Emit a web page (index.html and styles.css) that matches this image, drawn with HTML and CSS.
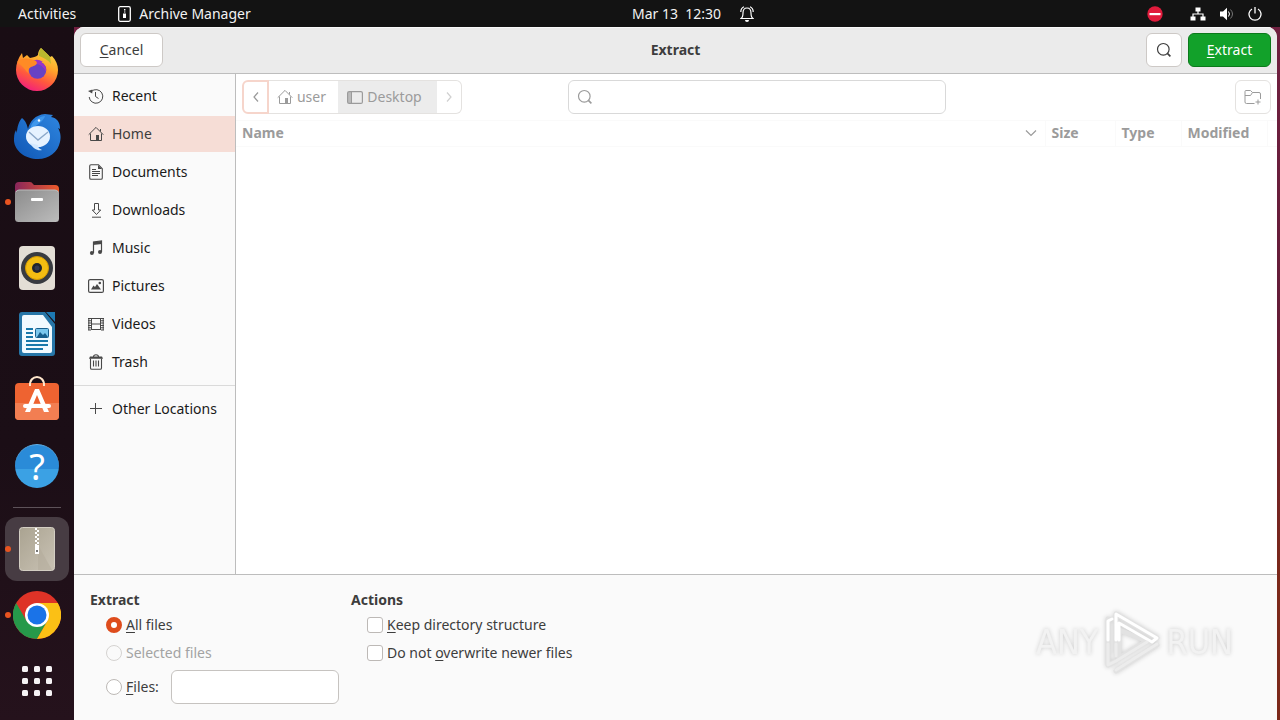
FILE: index.html
```html
<!DOCTYPE html>
<html lang="en">
<head>
<meta charset="utf-8">
<title>Extract</title>
<link rel="stylesheet" href="styles.css">
</head>
<body>
<svg class="sprite" aria-hidden="true">
  <symbol id="home" viewBox="0 0 16 16"><path d="M.7 8.7 8 1.4l7.3 7.3M2.5 7.5v7h11v-7M12.5 3v2.5" fill="none" stroke="currentColor"/><path d="M8 9h3v6H8z" fill="currentColor"/></symbol>
  <symbol id="search" viewBox="0 0 16 16"><circle cx="7.3" cy="7.3" r="5.8" fill="none" stroke="currentColor" stroke-width="1.2"/><path d="m11.4 11.4 3 3" stroke="currentColor" stroke-width="1.6"/></symbol>
</svg>
<header class="topbar">
  <div class="topbar-left">
    <button class="top-btn">Activities</button>
    <button class="top-btn app-menu">
      <svg width="14" height="16" viewBox="0 0 14 16"><rect x=".7" y=".7" width="11.6" height="14.6" rx="1.5" fill="none" stroke="#fff" stroke-width="1.3"/><path d="M6 3h1.4v1.4H6zM6 5.5h1.4v1H6zM5 7.5h3v4.5H5z" fill="#fff"/></svg>
      Archive Manager
    </button>
  </div>
  <div class="clock"><time>Mar 13&nbsp; 12:30</time>
    <svg width="14" height="16" viewBox="0 0 14 16"><path d="M1 12.5c1.7-1 2-2.500 2-5.500 0-3 1.500-5 4-5s4 2 4 5c0 3 .3 4.500 2 5.500zM.8 6C.8 3.500 2 1.500 4 .7M13.200 6c0-2.500-1.200-4.500-3.200-5.300" fill="none" stroke="#fff" stroke-width="1.200"/><path d="M5 14h4a2 2 0 0 1-4 0" fill="#fff"/></svg>
  </div>
  <div class="status">
    <svg class="dnd" width="16" height="16" viewBox="0 0 16 16"><circle cx="8" cy="8" r="7.700" fill="#e01b3c"/><path d="M2.500 7h11v2.200h-11z" fill="#fff"/></svg>
    <svg width="16" height="16" viewBox="0 0 16 16"><path d="M5.500 1.500h5v4h-5zM.5 10.500h5v4h-5zM10.500 10.500h5v4h-5z" fill="#fff"/><path d="M8 5v3M3 11V8h10v3" fill="none" stroke="#fff" stroke-width="1.200"/></svg>
    <svg width="16" height="16" viewBox="0 0 16 16"><path d="M1 5.500h3L8 1.700v12.600l-4-3.800H1z" fill="#fff"/><path d="M9.500 5.500q2 2.500 0 5" fill="none" stroke="#fff"/><path d="M11.500 3.500q4 4.500 0 9" fill="none" stroke="#777"/></svg>
    <svg width="14" height="16" viewBox="0 0 14 16"><path d="M4 3a6 6 0 1 0 6 0M7 1v6.500" fill="none" stroke="#fff" stroke-width="1.300"/></svg>
  </div>
</header>

<div class="desktop">
  <nav class="dock" aria-label="Dock">
    <button class="dock-item" aria-label="Firefox"><svg width="48" height="48" viewBox="0 0 48 48">
      <defs><linearGradient id="ff" x1=".8" y1="0" x2=".35" y2="1"><stop offset="0" stop-color="#f6e04a"/><stop offset=".4" stop-color="#ffa52a"/><stop offset=".7" stop-color="#ff5a3c"/><stop offset="1" stop-color="#f3207c"/></linearGradient></defs>
      <path d="M28 2c4 4 7 6 9 9l2-1c4 4 6 9 6 14a21 21 0 0 1-42 0c0-6 2-12 6-17l1 5 4-3 3 3c3-1 6-1 8-3 0-3 1-5 3-7z" fill="url(#ff)"/>
      <path d="M28 2c4 4 7 6 9 9l1 7c-3-4-7-6-12-8 0-3 0-5 2-8z" fill="#b9b82e"/>
      <circle cx="24.500" cy="24" r="8.800" fill="#6742c4"/><path d="M17 17q6-6 13-1l-2 0q6 4 5 10-4-9-12-8z" fill="#9a34c8"/><path d="M4 16c6-5 12-4 19-1l1 2c-1 3-4 3-6 4-3 2-3 4-2 7-4-4-5-7-12-12z" fill="#ff8b25"/></svg></button>
    <button class="dock-item" aria-label="Thunderbird"><svg width="48" height="48" viewBox="0 0 48 48">
      <defs><linearGradient id="tb" x1="1" y1="0" x2="0" y2="1"><stop offset="0" stop-color="#2f86e0"/><stop offset="1" stop-color="#0f56b4"/></linearGradient></defs>
      <path d="M9 6c4 3 5 7 6 11 2-8 7-14 17-15l8 1-2 2c6 1 9 5 9 12l-2-1c3 5 3 10 2 14-2 10-11 17-22 17C12 47 2 39 1 29c0-4 0-8 2-11l1 3C4 15 6 9 9 6z" fill="url(#tb)"/>
      <path d="M17 18c1-8 7-13 15-14-1 4-5 7-8 9" fill="#3f97ec"/><circle cx="26" cy="8.500" r="1.200" fill="#fff"/>
      <ellipse cx="25" cy="24.500" rx="12" ry="10.500" fill="#e6f2ff"/><path d="m16 20 9 8 10-8" fill="none" stroke="#8ca8c9" stroke-width="1.400"/><path d="M17 31c3 6 8 8 12 7-3-1-4-3-4-5" fill="#d4e9ff"/></svg></button>
    <button class="dock-item running" aria-label="Files"><svg width="48" height="48" viewBox="0 0 48 48">
      <defs><linearGradient id="fa"><stop stop-color="#89265b"/><stop offset="1" stop-color="#ee5b2b"/></linearGradient><linearGradient id="fb" x1="0" y1="0" x2="1" y2="1"><stop stop-color="#8c8c8c"/><stop offset="1" stop-color="#bcbcbc"/></linearGradient></defs>
      <path d="M2 8q0-4 4-4h11q2 0 3 2l1 1h21q4 0 4 4v15H2z" fill="url(#fa)"/><rect x="2" y="12" width="44" height="32" rx="3.500" fill="url(#fb)"/><path d="M3 14q1-2 3-2h36q2 0 3 2" fill="none" stroke="#bbb"/><rect x="18" y="20" width="12" height="3" rx="1" fill="#fff"/></svg></button>
    <button class="dock-item" aria-label="Rhythmbox"><svg width="48" height="48" viewBox="0 0 48 48"><rect x="6" y="2" width="36" height="44" rx="4" fill="#e3ded5"/><circle cx="24" cy="24" r="16" fill="#383b40"/><circle cx="24" cy="24" r="11.500" fill="#f3bd12" stroke="#d49b00"/><circle cx="24" cy="24" r="5" fill="#20242d"/><circle cx="24" cy="24" r="2.500" fill="#343a50"/></svg></button>
    <button class="dock-item" aria-label="LibreOffice Writer"><svg width="48" height="48" viewBox="0 0 48 48"><path d="M9 2h23l10 12v29q0 3-3 3H9q-3 0-3-3V5q0-3 3-3z" fill="#2676a8"/><path d="M33 2h9v10z" fill="#1d79b3"/><path d="M11 5h19l9 12v24q0 2-2 2H11q-2 0-2-2V7q0-2 2-2z" fill="#f1faff"/><path d="M13 19h7M13 23h7M13 27h7M13 31h22M13 35h22M13 39h17" stroke="#1878aa" stroke-width="2"/><rect x="22.500" y="18.500" width="13" height="9" rx="1" fill="#7ac7ed" stroke="#175f8d"/><path d="m24 27 3-5 3 3 2-2 3 4z" fill="#175f8d"/></svg></button>
    <button class="dock-item" aria-label="Ubuntu Software"><svg width="48" height="48" viewBox="0 0 48 48"><rect x="2" y="7" width="44" height="37" rx="4" fill="#ee6331"/><path d="M2 27h44v13q0 4-4 4H6q-4 0-4-4z" fill="#f27e52"/><path d="M17 10c-1-12 15-12 14 0" fill="none" stroke="#ffe6cc" stroke-width="2"/><path d="M22 13h4l10 23h-5l-7-17-7 17h-5z" fill="#fff"/><path d="M12 30h24" stroke="#fff" stroke-width="4" stroke-linecap="round"/></svg></button>
    <button class="dock-item" aria-label="Help"><span class="help-icon">?</span></button>
    <hr class="dock-sep">
    <button class="dock-item running active" aria-label="Archive Manager"><svg width="48" height="48" viewBox="0 0 48 48"><defs><linearGradient id="ar" x1="0" y1="0" x2="1" y2="1"><stop stop-color="#aaa391"/><stop offset="1" stop-color="#c9c2b4"/></linearGradient></defs><rect x="6.500" y="2.500" width="35" height="43" rx="3" fill="url(#ar)" stroke="#d3cec3"/><path d="m25 20 14 25H25z" fill="#b1aa99" opacity=".5"/><path d="M23 3v17M25 5v15" stroke="#fff" stroke-width="2" stroke-dasharray="2 2"/><path d="M22 20h4v9h-4z" fill="#fff"/><path d="M23 25h2v2h-2z" fill="#777"/></svg></button>
    <button class="dock-item running" aria-label="Google Chrome"><svg width="48" height="48" viewBox="0 0 48 48"><circle cx="24" cy="24" r="24" fill="#de3327"/><path d="M3.200 12A24 24 0 0 0 24 48L34.400 30 24 36 13.600 30z" fill="#26994a"/><path d="M44.800 12A24 24 0 0 1 24 48L34.400 30 34 18 24 12z" fill="#fbc015"/><circle cx="24" cy="24" r="12" fill="#fff"/><circle cx="24" cy="24" r="9.500" fill="#1a73e8"/></svg></button>
    <button class="dock-item" aria-label="Show Applications"><svg width="48" height="48" viewBox="0 0 48 48" fill="#f6f3f5"><rect x="9" y="9" width="6" height="6" rx="1.500"/><rect x="21" y="9" width="6" height="6" rx="1.500"/><rect x="33" y="9" width="6" height="6" rx="1.500"/><rect x="9" y="21" width="6" height="6" rx="1.500"/><rect x="21" y="21" width="6" height="6" rx="1.500"/><rect x="33" y="21" width="6" height="6" rx="1.500"/><rect x="9" y="33" width="6" height="6" rx="1.500"/><rect x="21" y="33" width="6" height="6" rx="1.500"/><rect x="33" y="33" width="6" height="6" rx="1.500"/></svg></button>
  </nav>

  <main class="dialog">
    <header class="headerbar">
      <div class="head-start"><button class="btn"><span><u>C</u>ancel</span></button></div>
      <h1 class="title">Extract</h1>
      <div class="head-end">
        <button class="btn icon-btn" aria-label="Search"><svg width="16" height="16"><use href="#search"/></svg></button>
        <button class="btn suggested"><span><u>E</u>xtract</span></button>
      </div>
    </header>

    <div class="body">
      <nav class="places" aria-label="Places">
        <a class="place" href="#"><svg width="16" height="16" viewBox="0 0 16 16"><path d="M3.300 3.500A6.800 6.800 0 1 1 1.200 9M7.500 4v4.500l3 2" fill="none" stroke="currentColor"/><path d="m0 3 4.500-1.500-.3 4z" fill="currentColor"/></svg>Recent</a>
        <a class="place selected" href="#"><svg width="16" height="16"><use href="#home"/></svg>Home</a>
        <a class="place" href="#"><svg width="16" height="16" viewBox="0 0 16 16"><path d="M3 .7h7.500l3.800 4V14q0 1.300-1.300 1.300H3Q1.700 15.300 1.700 14V2Q1.700.7 3 .7zM4 5.500h4M4 7.500h8M4 9.500h8M4 11.500h6" fill="none" stroke="currentColor" stroke-width="1.100"/><path d="M10 1v4h4z" fill="currentColor"/></svg>Documents</a>
        <a class="place" href="#"><svg width="16" height="16" viewBox="0 0 16 16"><path d="M6.500 1.500h4V8h2.200l-4.200 4.500L4.300 8h2.200zM4 15.200h9" fill="none" stroke="currentColor"/></svg>Downloads</a>
        <a class="place" href="#"><svg width="16" height="16" viewBox="0 0 16 16"><path d="M5.500 13V2l8-1v11" fill="none" stroke="currentColor" stroke-width="1.200"/><path d="M5 2l9-1v3L5 5z" fill="currentColor"/><circle cx="3.900" cy="13" r="2" fill="currentColor"/><circle cx="12" cy="12" r="2" fill="currentColor"/></svg>Music</a>
        <a class="place" href="#"><svg width="16" height="16" viewBox="0 0 16 16"><rect x=".6" y="1.600" width="14.800" height="12.800" rx="1.500" fill="none" stroke="currentColor" stroke-width="1.200"/><path d="m3 11.500 2.500-4L7 9l2-3 4 5.500z" fill="currentColor"/><circle cx="11.800" cy="5" r="1.300" fill="currentColor"/></svg>Pictures</a>
        <a class="place" href="#"><svg width="16" height="16" viewBox="0 0 16 16"><path d="M3.500 2v12M12.500 2v12M3.500 2.500h9M3.500 8h9M3.500 13.500h9" stroke="currentColor"/><path d="M1.500 2v12.500M14.500 2v12.500" stroke="currentColor" stroke-width="3" stroke-dasharray="1 1.300"/><path d="M.8 2v12M15.200 2v12" stroke="currentColor"/></svg>Videos</a>
        <a class="place" href="#"><svg width="16" height="16" viewBox="0 0 16 16"><path d="M2.500 4.500V14q0 1.300 1.300 1.300h8.400q1.300 0 1.300-1.300V4.500M5.500 6.500v6M8 6.500v6M10.500 6.500v6M5.500 3q0-2.300 2.500-2.300T10.500 3" fill="none" stroke="currentColor" stroke-width="1.100"/><path d="M2 2.500h12l1 2.200H1z" fill="currentColor"/></svg>Trash</a>
        <hr class="places-sep">
        <a class="place" href="#"><svg width="16" height="16" viewBox="0 0 16 16"><path d="M2 7.500h12M7.500 2v11" stroke="currentColor"/></svg>Other Locations</a>
      </nav>

      <section class="browser">
        <div class="pathrow">
          <div class="pathbar">
            <button class="crumb back" aria-label="Back"><svg width="8" height="12" viewBox="0 0 8 12"><path d="M6 1.500 2 6l4 4.500" fill="none" stroke="currentColor" stroke-width="1.200"/></svg></button>
            <button class="crumb user"><svg width="16" height="16"><use href="#home"/></svg>user</button>
            <button class="crumb current"><svg width="16" height="16" viewBox="0 0 16 16"><rect x=".6" y="2.600" width="14.800" height="11.800" rx="1.500" fill="none" stroke="currentColor" stroke-width="1.200"/><path d="M1 3h3v11H1z" fill="currentColor" opacity=".6"/><path d="M4.500 3v11" stroke="currentColor"/></svg>Desktop</button>
            <button class="crumb next" aria-label="Forward"><svg width="8" height="12" viewBox="0 0 8 12"><path d="m2 1.500 4 4.500-4 4.500" fill="none" stroke="currentColor" stroke-width="1.200"/></svg></button>
          </div>
          <label class="searchbox"><svg width="16" height="16"><use href="#search"/></svg><input type="text" aria-label="Search files"></label>
          <button class="btn icon-btn new-folder" aria-label="Create folder"><svg width="18" height="16" viewBox="0 0 18 16"><path d="M10.500 14.500H2.500q-1.500 0-1.500-1.500V2.500Q1 1.500 2 1.500h4.500l2 2H15q1.500 0 1.500 1.500v5M1 6.500h5.500l2-3M14 10.500v5M11.500 13h5" fill="none" stroke="currentColor"/></svg></button>
        </div>
        <table class="files">
          <thead><tr>
            <th><span class="name-head">Name <svg width="12" height="8" viewBox="0 0 12 8"><path d="m1 1.500 5 5 5-5" fill="none" stroke="currentColor" stroke-width="1.200"/></svg></span></th>
            <th class="col-size">Size</th><th class="col-type">Type</th><th class="col-mod">Modified</th><th class="col-end"></th>
          </tr></thead>
        </table>
      </section>
    </div>

    <footer class="options">
      <fieldset class="group extract">
        <legend>Extract</legend>
        <div class="opt"><input type="radio" name="scope" id="all" checked><label for="all"><u>A</u>ll files</label></div>
        <div class="opt disabled"><input type="radio" name="scope" id="sel" disabled><label for="sel">Selected files</label></div>
        <div class="opt with-entry"><input type="radio" name="scope" id="pattern"><label for="pattern"><u>F</u>iles:</label><input class="entry" type="text" aria-label="File pattern"></div>
      </fieldset>
      <fieldset class="group">
        <legend>Actions</legend>
        <div class="opt"><input type="checkbox" id="keep"><label for="keep"><u>K</u>eep directory structure</label></div>
        <div class="opt"><input type="checkbox" id="newer"><label for="newer">Do not <u>o</u>verwrite newer files</label></div>
      </fieldset>
    </footer>
    <div class="watermark"><span>ANY</span>
      <svg width="58" height="64" viewBox="0 0 58 64"><g fill="none" stroke-linejoin="round" stroke-linecap="round"><path d="M13 4v38M13 4l41 24M5 9v46l8-4M16 20v28l28-17zM13 61l41-26" stroke="#e2e2e2" stroke-width="5"/><path d="M13 30V4l41 24-5 4-33-19v17M5 30V11l4-2" stroke="#fff" stroke-width="3"/><path d="M5 34v21l8-4 31-19M13 60l41-26M13 34v12" stroke="#ececec" stroke-width="3"/></g></svg>
      <span>RUN</span></div>
  </main>
</div>
</body>
</html>
```
FILE: styles.css
```css
* { box-sizing: border-box; }

body {
  margin: 0;
  min-height: 100vh;
  display: flex;
  flex-direction: column;
  font: 14px/20px "Noto Sans", "Open Sans", sans-serif;
  color: #3d3d3d;
  background: #1b0e15;
}

button, input { font: inherit; color: inherit; margin: 0; }
button { cursor: pointer; }
svg { display: block; flex: none; }
.sprite { position: absolute; width: 0; height: 0; }
u { text-underline-offset: 2px; }

/* Top bar */
.topbar {
  display: grid;
  grid-template-columns: 1fr auto 1fr;
  align-items: center;
  height: 27px;
  padding: 0 18px;
  color: #f2f2f2;
  background: #131313;
}
.topbar-left, .clock, .status { display: flex; align-items: center; }
.topbar-left { gap: 42px; }
.top-btn { display: flex; align-items: center; gap: 7px; padding: 0; border: 0; background: none; white-space: nowrap; }
.clock { gap: 19px; padding-left: 106px; white-space: nowrap; }
.status { justify-content: flex-end; gap: 13px; }
.dnd { margin-right: 14px; }

/* Desktop and dock */
.desktop {
  flex: 1;
  display: flex;
  padding-right: 3px;
  background: linear-gradient(#702040, #641c38 40%, #7b2819 80%, #7b2819);
}
.dock {
  flex: none;
  width: 74px;
  padding: 11px 5px 0;
  display: flex;
  flex-direction: column;
  gap: 2px;
  background: linear-gradient(#190d14, #1b0e16 60%, #25121c);
}
.dock-item {
  position: relative;
  display: grid;
  place-items: center;
  height: 64px;
  padding: 0;
  border: 0;
  border-radius: 12px;
  background: none;
}
.dock-item.active { background: #473c43; }
.dock-item.running::before {
  content: "";
  position: absolute;
  left: 0;
  width: 6px;
  height: 6px;
  border-radius: 50%;
  background: #e95420;
}
.dock-sep { width: 48px; height: 1px; margin: 7px auto; border: 0; background: #5d5259; }
.help-icon {
  width: 44px;
  height: 44px;
  border-radius: 50%;
  font-size: 36px;
  line-height: 44px;
  text-align: center;
  color: #fff;
  background: linear-gradient(#2a8bd8 55%, #3ba1e4 55%);
  border-top: 1px solid #62b1e8;
}

/* Dialog */
.dialog {
  position: relative;
  flex: 1;
  min-width: 0;
  display: flex;
  flex-direction: column;
  border-radius: 10px 10px 0 0;
  overflow: hidden;
  background: #fafafa;
}
.headerbar {
  display: grid;
  grid-template-columns: 1fr auto 1fr;
  align-items: center;
  padding: 5px 6px 6px;
  background: #ebebeb;
  border-top: 1px solid #f8f8f8;
  border-bottom: 1px solid #bdbdbd;
}
.title { margin: 0; font-size: 14px; line-height: 20px; font-weight: 700; }
.head-start, .head-end { display: flex; gap: 6px; }
.head-end { justify-content: flex-end; }
.btn {
  display: grid;
  place-items: center;
  height: 34px;
  min-width: 83px;
  padding: 0 16px;
  border: 1px solid #cdc9c6;
  border-radius: 6px;
  background: #fff;
}
.icon-btn { min-width: 36px; width: 36px; padding: 0; }
.suggested { color: #fff; border-color: #0b7a1b; background: #12a12a; }

.body { flex: 1; display: flex; border-bottom: 1px solid #bdbdbd; }
.places {
  flex: none;
  width: 162px;
  padding-top: 4px;
  display: flex;
  flex-direction: column;
  gap: 2px;
  background: #fafafa;
  border-right: 1px solid #bdbdbd;
}
.place {
  display: flex;
  align-items: center;
  gap: 8px;
  height: 36px;
  padding-left: 14px;
  color: #1a1a1a;
  text-decoration: none;
  white-space: nowrap;
}
.place svg { color: #484848; }
.place.selected { color: #3d3d3d; background: #f6ddd6; }
.places-sep { width: 100%; height: 1px; margin: 3px 0; border: 0; background: #dadada; }

.browser { flex: 1; min-width: 0; background: #fff; color: #9b9b9b; }
.pathrow { display: grid; grid-template-columns: 1fr 378px 1fr; padding: 6px; }
.pathbar { display: flex; }
.crumb {
  display: flex;
  align-items: center;
  justify-content: center;
  gap: 4px;
  height: 34px;
  padding: 0;
  border: 1px solid #e4e2e0;
  border-width: 1px 0;
  background: #fff;
}
.crumb.back { width: 27px; border: 2px solid #f6d5cb; border-radius: 6px 0 0 6px; }
.crumb.user { width: 69px; padding-right: 4px; }
.crumb.current { width: 99px; padding-right: 6px; background: #ececec; }
.crumb.next { width: 25px; color: #d0d0d0; border-right-width: 1px; border-radius: 0 6px 6px 0; }
.searchbox {
  display: flex;
  align-items: center;
  gap: 6px;
  height: 34px;
  padding: 0 8px;
  border: 1px solid #d9d9d9;
  border-radius: 6px;
}
.searchbox input { flex: 1; min-width: 0; border: 0; outline: 0; background: none; }
.new-folder { justify-self: end; border-color: #e4e2e0; }

.files { width: 100%; border-collapse: collapse; table-layout: fixed; }
.files th {
  height: 26px;
  padding: 0 6px 2px;
  text-align: left;
  border: 1px solid #fafafa;
  border-left: 0;
}
.name-head { display: flex; align-items: center; justify-content: space-between; padding-right: 2px; }
.files .col-size { width: 70px; }
.files .col-type { width: 66px; }
.files .col-mod { width: 86px; }
.files .col-end { width: 10px; padding: 0; border-right: 0; }

/* Options */
.options { display: flex; gap: 12px; padding: 15px 16px 16px; }
.group { margin: 0; padding: 0; border: 0; min-width: 0; }
.extract { width: 249px; }
legend { padding: 0 0 1px; font-weight: 700; line-height: 20px; }
.opt { display: flex; align-items: center; gap: 4px; height: 28px; padding-left: 16px; }
.opt.disabled { color: #a3a3a3; }
.opt.with-entry { height: 34px; margin-top: 3px; }
.opt input[type="radio"], .opt input[type="checkbox"] {
  appearance: none;
  flex: none;
  width: 16px;
  height: 16px;
  border: 1px solid #bdb9b6;
  border-radius: 50%;
  background: #fff;
}
.opt input[type="checkbox"] { border-radius: 3px; }
.opt input[type="radio"]:checked { border: 5px solid #de4c1c; }
.opt input[type="radio"]:disabled { border-color: #d5d3d1; background: #fafafa; }
.entry {
  width: 168px;
  height: 34px;
  margin-left: auto;
  padding: 0 8px;
  border: 1px solid #c6c3c0;
  border-radius: 6px;
  background: #fff;
}

/* Watermark laid over the dialog */
.watermark {
  position: absolute;
  right: 44px;
  bottom: 46px;
  display: flex;
  align-items: center;
  gap: 5px;
  font: 34px/40px "Liberation Sans Narrow", "DejaVu Sans Condensed", sans-serif;
  color: #f2f2f2;
  filter: drop-shadow(0 0 2px #cccccc);
  pointer-events: none;
}
```
